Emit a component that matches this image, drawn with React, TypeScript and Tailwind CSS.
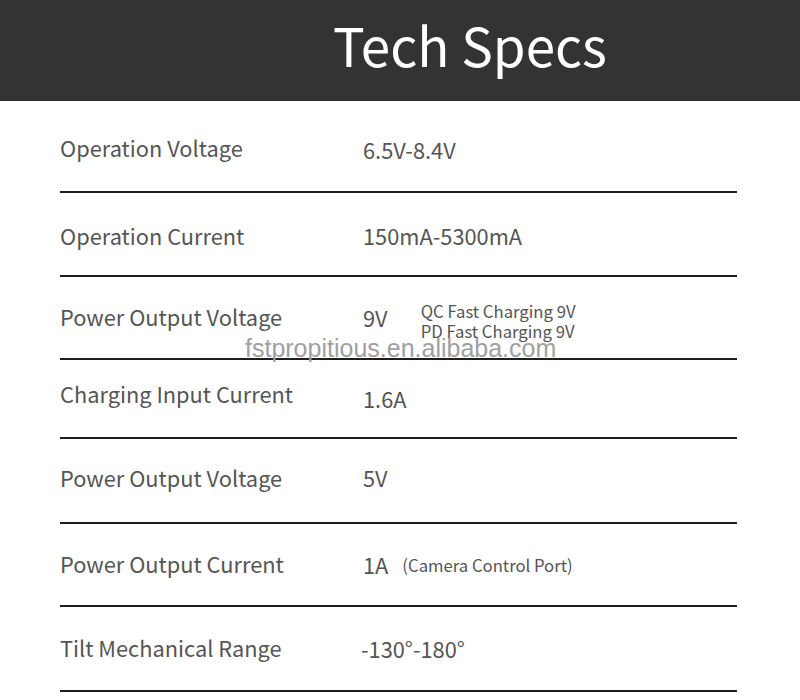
import React from "react";

const font = { fontFamily: '"Noto Sans CJK SC", "Noto Sans", sans-serif' };

type Row = {
  label: string;
  h: string;
  pt: string;
  value: React.ReactNode;
};

const rows: Row[] = [
  {
    label: "Operation Voltage",
    h: "h-[92px]",
    pt: "pt-[32px]",
    value: <span className="mt-[2px] block">6.5V-8.4V</span>,
  },
  {
    label: "Operation Current",
    h: "h-[84px]",
    pt: "pt-[28px]",
    value: <span className="block">150mA-5300mA</span>,
  },
  {
    label: "Power Output Voltage",
    h: "h-[83px]",
    pt: "pt-[25px]",
    value: (
      <div className="flex items-start">
        <span className="mt-[1px] block">9V</span>
        <div className="ml-[33px] -mt-[1px] text-[16.7px] leading-[20px]">
          <div>QC Fast Charging 9V</div>
          <div>PD Fast Charging 9V</div>
        </div>
      </div>
    ),
  },
  {
    label: "Charging Input Current",
    h: "h-[79px]",
    pt: "pt-[19px]",
    value: <span className="mt-[5px] block">1.6A</span>,
  },
  {
    label: "Power Output Voltage",
    h: "h-[85px]",
    pt: "pt-[24px]",
    value: <span className="block">5V</span>,
  },
  {
    label: "Power Output Current",
    h: "h-[83px]",
    pt: "pt-[25px]",
    value: (
      <div className="flex items-center">
        <span className="mt-[1px] block">1A</span>
        <span className="ml-[14px] text-[16.7px]">(Camera Control Port)</span>
      </div>
    ),
  },
  {
    label: "Tilt Mechanical Range",
    h: "h-[85px]",
    pt: "pt-[26px]",
    value: <span className="-ml-[2px] mt-[1px] block">-130°-180°</span>,
  },
];

export default function App() {
  return (
    <div className="relative w-[800px] h-[700px] bg-white overflow-hidden" style={font}>
      <div className="h-[101px] bg-[#333333] flex items-center pl-[333px]">
        <h1 className="text-[53px] leading-none text-white font-normal -mt-[12px]">Tech Specs</h1>
      </div>
      <div className="ml-[60px] w-[677px]">
        {rows.map((r, i) => (
          <div
            key={i}
            className={`${r.h} ${r.pt} border-b-2 border-[#1e1e1e] flex items-start text-[21.8px] leading-[30px] text-[#555555]`}
          >
            <div className="w-[303px] shrink-0">{r.label}</div>
            <div>{r.value}</div>
          </div>
        ))}
      </div>
      <div
        className="absolute left-[245px] top-[333px] text-[25px] leading-[30px] text-[#a0a0a0]"
        style={{ fontFamily: '"Liberation Sans", Arial, sans-serif' }}
      >
        fstpropitious.en.alibaba.com
      </div>
    </div>
  );
}
